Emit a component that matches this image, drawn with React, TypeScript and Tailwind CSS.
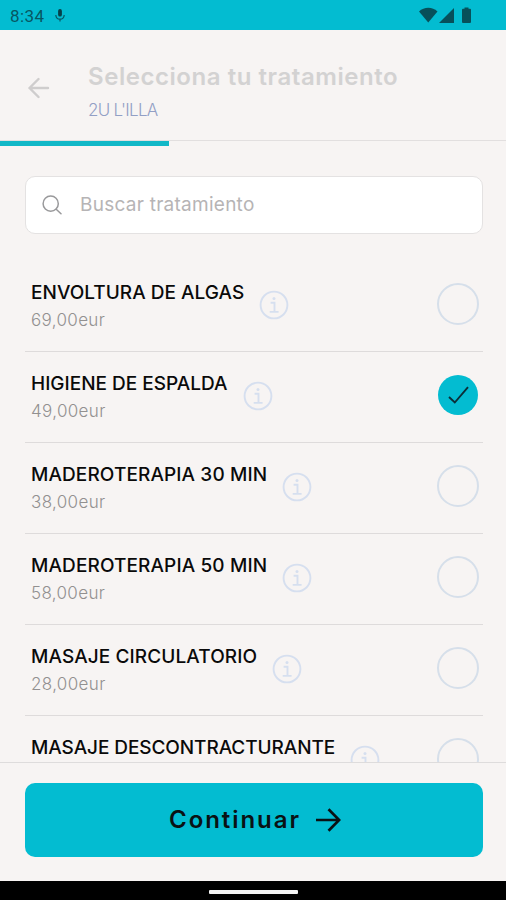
import { useState } from "react";

type Treatment = { name: string; price?: string; tracking: string };

const treatments: Treatment[] = [
  { name: "ENVOLTURA DE ALGAS", price: "69,00eur", tracking: "tracking-[0.03px]" },
  { name: "HIGIENE DE ESPALDA", price: "49,00eur", tracking: "tracking-[0px]" },
  { name: "MADEROTERAPIA 30 MIN", price: "38,00eur", tracking: "tracking-[0.11px]" },
  { name: "MADEROTERAPIA 50 MIN", price: "58,00eur", tracking: "tracking-[0.12px]" },
  { name: "MASAJE CIRCULATORIO", price: "28,00eur", tracking: "tracking-[0.1px]" },
  { name: "MASAJE DESCONTRACTURANTE", tracking: "tracking-[-0.08px]" },
];

function StatusBar() {
  return (
    <div className="flex h-[30px] shrink-0 items-center bg-[#03bcd1] pl-[10px] pr-[32px] text-[#075763]">
      <span className="mt-[2px] w-[45px] font-[Roboto] text-[17px] leading-none tracking-[0.4px]">8:34</span>
      <svg className="h-[13px] w-[10px]" viewBox="0 0 10 13" fill="none">
        <rect x="3.1" y="0" width="3.8" height="7.6" rx="1.9" fill="#063f48" />
        <path d="M.8 6c.3 5.6 8.1 5.6 8.4 0M5 10v2.4" stroke="#075763" strokeWidth="1.2" />
      </svg>
      <svg className="ml-auto h-[17px] w-[55px]" viewBox="0 0 55 17" fill="#07505a">
        <path d="M0 4.4C5.2-.4 13.300-.4 18.500 4.400L9.250 15.500Z" />
        <path d="M20 16 35 1v15Z" />
        <path d="M44 1.800h1.500V.5h4v1.300H51q1 0 1 1v12.200q0 1-1 1h-7q-1 0-1-1V2.800q0-1 1-1Z" />
      </svg>
    </div>
  );
}

function Header() {
  return (
    <header className="flex h-[111px] shrink-0 border-b border-[#e2dfdf]">
      <svg className="ml-[28px] mt-[47px] h-[22px] w-[22px]" viewBox="0 0 22 22" fill="none" stroke="#cfcdcd" strokeWidth="2.400" strokeLinecap="round" strokeLinejoin="round">
        <path d="M20 11H1.500M10.500 2 1.500 11l9 9" />
      </svg>
      <div className="ml-[38px] mt-[32px] whitespace-nowrap">
        <h1 className="text-[24px] font-semibold leading-[30px] tracking-[0.55px] text-[#d3d2d2]">Selecciona tu tratamiento</h1>
        <p className="mt-[8px] text-[17px] font-light leading-[20px] tracking-[-0.7px] text-[#929fc5]">2U L'ILLA</p>
      </div>
    </header>
  );
}

function InfoIcon() {
  return (
    <svg className="h-[30px] w-[30px] shrink-0" viewBox="0 0 30 30" fill="none" stroke="#d6dfef" strokeWidth="1.900">
      <circle cx="15" cy="15" r="13.400" />
      <path d="M11.600 12.700h3.900v9M10.700 21.900h8.900" />
      <circle cx="15" cy="8.600" r="1.500" fill="#d6dfef" stroke="none" />
    </svg>
  );
}

export default function App() {
  const [selected, setSelected] = useState(1);
  return (
    <div className="flex h-[900px] w-[506px] flex-col overflow-hidden bg-[#f7f4f3] font-[Inter,sans-serif]">
      <StatusBar />
      <Header />
      <div className="h-[5px] w-[169px] shrink-0 bg-[#12b8c7]" />
      <main className="min-h-0 flex-1 overflow-hidden px-[25px] pt-[30px]">
        <label className="flex h-[58px] w-[458px] items-center rounded-[10px] border border-[#e4e2e2] bg-white pl-[16px]">
          <svg className="h-[20px] w-[20px] shrink-0" viewBox="0 0 20 20" fill="none" stroke="#99999b" strokeWidth="1.500" strokeLinecap="round">
            <circle cx="8.700" cy="8.700" r="7.600" />
            <path d="m14.200 14.200 4.800 4.600" />
          </svg>
          <input
            className="ml-[18px] w-[300px] bg-transparent text-[19px] tracking-[0.26px] outline-none placeholder:text-[#b6b4b5]"
            placeholder="Buscar tratamiento"
          />
        </label>
        <ul className="mt-[26.500px] w-[458px]">
          {treatments.map((t, i) => (
            <li key={t.name} className="flex h-[91.100px] border-b-[1.500px] border-[#dedbdb] pl-[6px]">
              <div className="mt-[19.300px] whitespace-nowrap">
                <div className={`text-[19px] font-medium leading-[26px] text-[#0a0a0a] ${t.tracking}`}>{t.name}</div>
                {t.price && (
                  <div className="mt-[3px] text-[17px] font-light leading-[22px] tracking-[0.35px] text-[#929090]">{t.price}</div>
                )}
              </div>
              <div className="ml-[15.200px] mt-[29.300px]">
                <InfoIcon />
              </div>
              <button
                onClick={() => setSelected(i)}
                className={`ml-auto mr-[4px] mt-[22.300px] flex h-[42px] w-[42px] shrink-0 items-center justify-center rounded-full ${
                  selected === i ? "border border-transparent bg-[#03bcd1] bg-clip-padding" : "border-2 border-[#d6dfea]"
                }`}
              >
                {selected === i && (
                  <svg className="h-[18px] w-[21px]" viewBox="0 0 21 18" fill="none" stroke="#0b2f38" strokeWidth="1.900">
                    <path d="m1 11 5.800 5.500L20 1.200" />
                  </svg>
                )}
              </button>
            </li>
          ))}
        </ul>
      </main>
      <footer className="flex h-[119px] shrink-0 border-t border-[#dedcdc] px-[25px] pt-[20px]">
        <button className="flex h-[74px] w-[458px] shrink-0 items-center rounded-[10px] bg-[#03bcd1] pl-[144px] text-[#0a1214]">
          <span className="w-[147px] whitespace-nowrap text-left text-[24px] font-semibold tracking-[1.950px]">Continuar</span>
          <svg className="h-[24px] w-[25px]" viewBox="0 0 25 24" fill="none" stroke="currentColor" strokeWidth="2.700">
            <path d="M0 12h23M12.500 1.300 23.200 12 12.500 22.700" />
          </svg>
        </button>
      </footer>
      <div className="flex h-[19px] shrink-0 justify-center bg-black pt-[9px]">
        <div className="h-[4px] w-[89px] rounded-[1px] bg-[#f5f5f5]" />
      </div>
    </div>
  );
}
